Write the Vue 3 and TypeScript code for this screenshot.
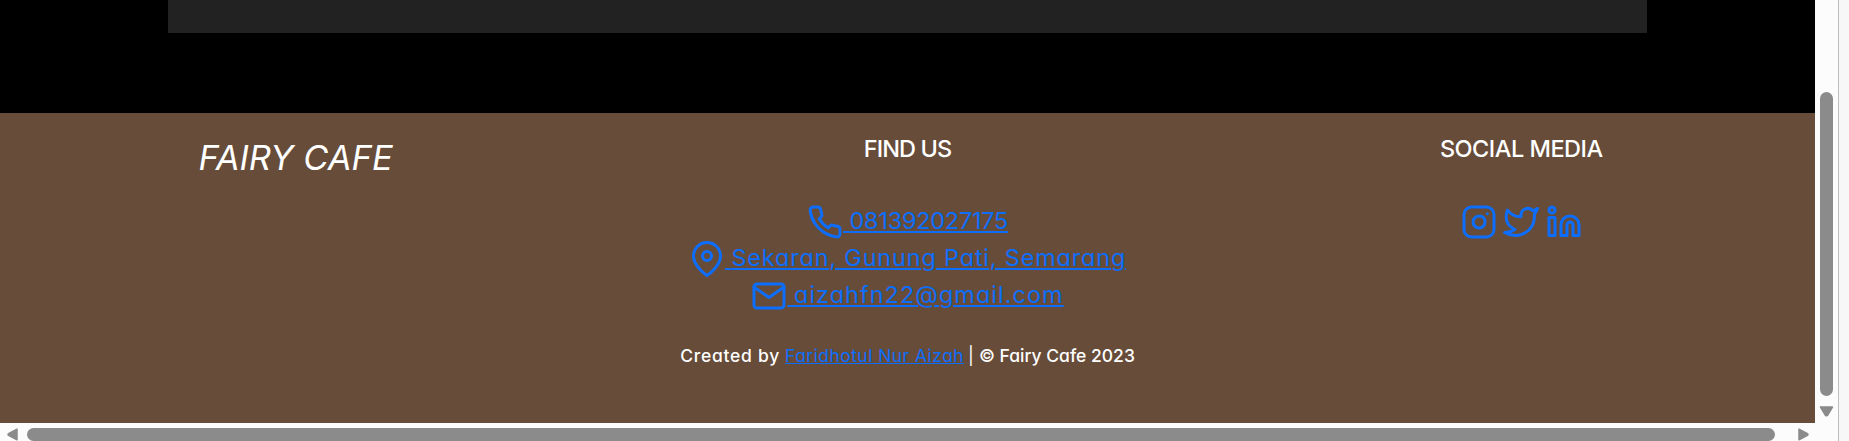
<script setup lang="ts">
interface Contact {
  name: string
  label: string
  shapes: string[]
}

const contacts: Contact[] = [
  {
    name: 'phone',
    label: '081392027175',
    shapes: [
      'M22 16.92v3a2 2 0 0 1-2.18 2 19.79 19.79 0 0 1-8.63-3.07 19.5 19.5 0 0 1-6-6 19.79 19.79 0 0 1-3.07-8.67A2 2 0 0 1 4.11 2h3a2 2 0 0 1 2 1.72 12.84 12.84 0 0 0 .7 2.81 2 2 0 0 1-.45 2.11L8.09 9.91a16 16 0 0 0 6 6l1.27-1.27a2 2 0 0 1 2.11-.45 12.84 12.84 0 0 0 2.81.7A2 2 0 0 1 22 16.92z',
    ],
  },
  {
    name: 'address',
    label: 'Sekaran, Gunung Pati, Semarang',
    shapes: [
      'M21 10c0 7-9 13-9 13s-9-6-9-13a9 9 0 0 1 18 0z',
      'M15 10a3 3 0 1 1-6 0a3 3 0 1 1 6 0z',
    ],
  },
  {
    name: 'email',
    label: 'aizahfn22@gmail.com',
    shapes: [
      'M4 4h16c1.1 0 2 .9 2 2v12c0 1.1-.9 2-2 2H4c-1.1 0-2-.9-2-2V6c0-1.1.9-2 2-2z',
      'M22 6l-10 7L2 6',
    ],
  },
]

const socials = [
  {
    name: 'Instagram',
    shapes: [
      'M7 2h10a5 5 0 0 1 5 5v10a5 5 0 0 1-5 5H7a5 5 0 0 1-5-5V7a5 5 0 0 1 5-5z',
      'M16 11.37A4 4 0 1 1 12.63 8 4 4 0 0 1 16 11.37z',
      'M17.5 6.5h.01',
    ],
  },
  {
    name: 'Twitter',
    shapes: [
      'M23 3a10.9 10.9 0 0 1-3.14 1.53 4.48 4.48 0 0 0-7.86 3v1A10.66 10.66 0 0 1 3 4s-4 9 5 13a11.64 11.64 0 0 1-7 2c9 5 20 0 20-11.5a4.5 4.5 0 0 0-.08-.83A7.72 7.72 0 0 0 23 3z',
    ],
  },
  {
    name: 'LinkedIn',
    shapes: [
      'M16 8a6 6 0 0 1 6 6v7h-4v-7a2 2 0 0 0-4 0v7h-4v-7a6 6 0 0 1 6-6z',
      'M2 9h4v12H2z',
      'M6 4a2 2 0 1 1-4 0a2 2 0 1 1 4 0z',
    ],
  },
]
</script>

<template>
  <div class="window">
    <div class="viewport">
      <main class="page">
        <section class="content"><div class="panel"></div></section>
        <footer class="footer">
          <div class="columns">
            <div class="brand">FAIRY CAFE</div>
            <div class="column">
              <h2 class="heading find">FIND US</h2>
              <a v-for="c in contacts" :key="c.name" class="contact" :class="c.name" href="#">
                <svg class="icon" viewBox="0 0 24 24">
                  <path v-for="d in c.shapes" :key="d" :d="d" />
                </svg>
                <span class="label">&nbsp;<span class="text">{{ c.label }}</span></span>
              </a>
            </div>
            <div class="column social">
              <h2 class="heading media">SOCIAL MEDIA</h2>
              <div class="socials">
                <a v-for="s in socials" :key="s.name" href="#" :aria-label="s.name">
                  <svg class="icon" viewBox="0 0 24 24">
                    <path v-for="d in s.shapes" :key="d" :d="d" />
                  </svg>
                </a>
              </div>
            </div>
          </div>
          <p class="credit">
            <span class="by">Created by</span>
            <a class="author" href="#">Faridhotul Nur Aizah</a>
            <span class="bar">|</span>
            <span class="rights">© Fairy Cafe 2023</span>
          </p>
        </footer>
      </main>
      <div class="vscroll">
        <div class="vthumb"></div>
        <svg class="down" viewBox="0 0 15 11"><path d="M1.5 1h12L9 8.7Q7.5 10.8 6 8.7z" /></svg>
      </div>
    </div>
    <div class="hscroll">
      <svg class="arrow" viewBox="0 0 11 13"><path d="M10 1.2v10.6L2 7.6Q0 6.5 2 5.4z" /></svg>
      <div class="hthumb"></div>
      <svg class="arrow right" viewBox="0 0 11 13"><path d="M1 1.2v10.6L9 7.6Q11 6.5 9 5.4z" /></svg>
    </div>
  </div>
</template>

<style>
body {
  margin: 0;
  overflow: hidden;
}
</style>

<style scoped>
.window {
  box-sizing: border-box;
  width: 1849px;
  height: 441px;
  border-right: 10px solid #f7f7f7;
  background: #fcfcfc;
  box-shadow: inset -1px 0 #bebebe;
  font-family: Inter, "Open Sans", sans-serif;
  font-feature-settings: "cv11";
  color: #fff;
  overflow: hidden;
}
.viewport {
  display: flex;
  height: 423px;
}
.page {
  flex: none;
  width: 1815px;
  background: #000;
}
.content {
  height: 113px;
}
.panel {
  width: 1479px;
  height: 33px;
  margin: 0 auto;
  background: #222;
}
.footer {
  box-sizing: border-box;
  height: 310px;
  padding-top: 17px;
  background: #664c39;
}
.columns {
  display: grid;
  grid-template-columns: 1fr 492px 1fr;
  width: 1719px;
  margin: 0 auto;
  height: 185px;
}
.brand {
  padding: 7px 0 0 150.5px;
  font-size: 34.5px;
  line-height: 42px;
  font-style: italic;
  font-weight: 450;
}
.column {
  display: flex;
  flex-direction: column;
  align-items: center;
}
.heading {
  margin: 1px 0 37px;
  font-size: 23.5px;
  font-weight: 450;
  line-height: 36px;
}
.find {
  letter-spacing: -0.9px;
}
.media {
  letter-spacing: -0.5px;
}
.contact {
  display: flex;
  height: 37px;
  color: #0d6efd;
  text-decoration: none;
}
.icon {
  display: block;
  width: 36px;
  height: 36px;
  fill: none;
  stroke: #0d6efd;
  stroke-width: 2;
  stroke-linecap: round;
  stroke-linejoin: round;
}
.label {
  font-size: 23.5px;
  font-weight: 400;
  line-height: 33px;
  text-decoration: underline 2px;
  text-underline-offset: 2px;
}
.phone .text {
  letter-spacing: -0.27px;
}
.address .text {
  letter-spacing: 0.8px;
}
.email .text {
  letter-spacing: 1px;
}
.social {
  margin-left: 122px;
}
.socials {
  display: flex;
  gap: 6.5px;
}
.credit {
  display: flex;
  justify-content: center;
  margin: 27px 0 0;
  font-size: 17.5px;
  line-height: 28px;
}
.by {
  font-weight: 450;
  letter-spacing: 0.75px;
  margin-right: 5px;
}
.author {
  color: #0d6efd;
  font-weight: 400;
  letter-spacing: 0.44px;
  text-decoration: underline 1px;
  text-underline-offset: 1px;
}
.bar {
  margin: 0 5px 0 4px;
}
.rights {
  font-weight: 450;
}
.vscroll {
  box-sizing: border-box;
  display: flex;
  flex-direction: column;
  align-items: center;
  width: 23px;
  padding-top: 92px;
}
.vthumb {
  width: 13px;
  height: 304px;
  border-radius: 7px;
  background: #8b8b8b;
}
.down {
  width: 15px;
  height: 11px;
  margin-top: 10px;
}
.down path,
.arrow path {
  fill: #8b8b8b;
  stroke: #8b8b8b;
  stroke-width: 1.5;
  stroke-linejoin: round;
}
.hscroll {
  display: flex;
  padding: 5px 0 0 7px;
}
.arrow {
  width: 11px;
  height: 13px;
}
.hthumb {
  width: 1748px;
  height: 13px;
  margin-left: 9px;
  border-radius: 7px;
  background: #8b8b8b;
}
.right {
  margin-left: 23px;
}
</style>
